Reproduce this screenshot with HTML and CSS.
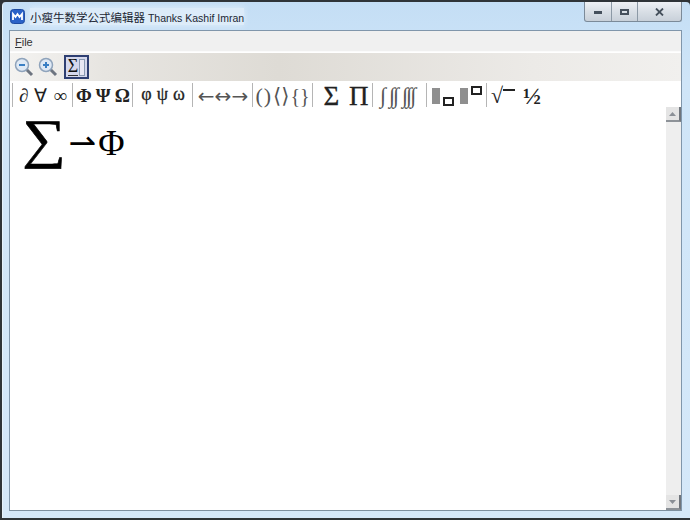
FILE: index.html
```html
<!DOCTYPE html>
<html lang="en">
<head>
    <meta charset="UTF-8">
    <title>小瘦牛数学公式编辑器 Thanks Kashif Imran</title>
    <link rel="stylesheet" href="styles.css">
</head>
<body>
    <div class="window">
        <div class="titlebar">
            <svg class="app-icon" width="15" height="15" viewBox="0 0 15 15">
                <rect x="0.5" y="0.5" width="14" height="14" rx="3" fill="#2a62c8" stroke="#1d4aa0"/>
                <path d="M3 11V5l2.500 3L7.500 5l2 3L12 5v6" fill="none" stroke="#fff" stroke-width="1.800"/>
            </svg>
            <span class="title"><span class="title-cjk">小瘦牛数学公式编辑器</span> Thanks Kashif Imran</span>
            <div class="controls">
                <div class="ctl ctl-min"><i></i></div>
                <div class="ctl ctl-max"><i></i></div>
                <div class="ctl ctl-close">
                    <svg width="9" height="8" viewBox="0 0 9 8"><path d="M1 .5l7 7M8 .5l-7 7" stroke="#45505c" stroke-width="1.800" fill="none"/></svg>
                </div>
            </div>
        </div>

        <div class="client">
            <div class="menubar"><span class="menu-item"><u>F</u>ile</span></div>

            <div class="toolbar">
                <button class="tool">
                    <svg width="20" height="20" viewBox="0 0 20 20">
                        <path d="M12 12l6 6" stroke="#6d7480" stroke-width="3"/>
                        <circle cx="8" cy="8" r="6.500" fill="#dfe9f5" stroke="#8fa3bb" stroke-width="1.500"/>
                        <path d="M5 8h6" stroke="#3a7fc4" stroke-width="2"/>
                    </svg>
                </button>
                <button class="tool">
                    <svg width="20" height="20" viewBox="0 0 20 20">
                        <path d="M12 12l6 6" stroke="#6d7480" stroke-width="3"/>
                        <circle cx="8" cy="8" r="6.500" fill="#dfe9f5" stroke="#8fa3bb" stroke-width="1.500"/>
                        <path d="M5 8h6M8 5v6" stroke="#3a7fc4" stroke-width="2"/>
                    </svg>
                </button>
                <button class="tool tool-active">
                    <span class="tool-sigma">Σ</span><span class="tool-box"></span>
                </button>
            </div>

            <div class="symbols">
                <div class="group"><span class="sym">∂</span><span class="sym">∀</span><span class="sym">∞</span></div>
                <div class="group bold"><span class="sym">Φ</span><span class="sym">Ψ</span><span class="sym">Ω</span></div>
                <div class="group bold small"><span class="sym">φ</span><span class="sym">ψ</span><span class="sym">ω</span></div>
                <div class="group arrows"><span class="sym">←</span><span class="sym">↔</span><span class="sym">→</span></div>
                <div class="group brackets"><span class="sym">()</span><span class="sym angle">⟨⟩</span><span class="sym brace">{}</span></div>
                <div class="group big"><span class="sym">Σ</span><span class="sym">Π</span></div>
                <div class="group integrals"><span class="sym">∫</span><span class="sym">∫∫</span><span class="sym">∫∫∫</span></div>
                <div class="group scripts">
                    <span class="script"><i class="block"></i><i class="box box-low"></i></span>
                    <span class="script"><i class="block"></i><i class="box box-high"></i></span>
                </div>
                <div class="group last"><span class="sym radical">√<i></i></span><span class="sym half">½</span></div>
            </div>

            <div class="editor">
                <div class="canvas">
                    <span class="f-sigma">∑</span>
                    <span class="f-arrow">⇀</span>
                    <span class="f-phi">Φ</span>
                </div>
                <div class="scrollbar">
                    <div class="sb-btn"><svg width="7" height="4" viewBox="0 0 7 4"><path d="M3.500 0L7 4H0z" fill="#8a8f96"/></svg></div>
                    <div class="sb-track"></div>
                    <div class="sb-btn"><svg width="7" height="4" viewBox="0 0 7 4"><path d="M0 0h7L3.500 4z" fill="#8a8f96"/></svg></div>
                </div>
            </div>
        </div>
    </div>
</body>
</html>
```

FILE: styles.css
```css
html, body {
    margin: 0;
    height: 100%;
    overflow: hidden;
}

body {
    background: #2f3438;
    padding: 2px 0 2px 2px;
    box-sizing: border-box;
    font-family: "Liberation Sans", "Noto Sans CJK SC", sans-serif;
}

.window {
    height: 100%;
    display: flex;
    flex-direction: column;
    background: linear-gradient(180deg, #c4def5 0%, #cfe5f8 15%, #d5e8f9 100%);
    border-radius: 4px 4px 0 0;
    padding: 0 8px 7px 6px;
    box-sizing: border-box;
    border-left: 1px solid #e6f2fb;
}

.titlebar {
    height: 28px;
    flex: none;
    display: flex;
    align-items: center;
    gap: 5px;
    padding-left: 1px;
}

.app-icon {
    flex: none;
}

.title {
    font-size: 10.500px;
    color: #1c2733;
    padding-top: 1px;
    background: rgba(235, 244, 252, 0.6);
    box-shadow: 0 0 6px rgba(235, 244, 252, 0.8);
}

.title-cjk {
    font-size: 11.500px;
}

.controls {
    margin-left: auto;
    align-self: flex-start;
    display: flex;
    height: 19px;
    border: 1px solid #7b8a99;
    border-top: none;
    border-radius: 0 0 3px 3px;
    background: linear-gradient(180deg, #eef1f5 0%, #d9dfe6 50%, #c8d0d9 100%);
}

.ctl {
    display: flex;
    align-items: center;
    justify-content: center;
    height: 100%;
    border-right: 1px solid #8c99a6;
}

.ctl-min { width: 26px; }
.ctl-max { width: 25px; }
.ctl-close { width: 43px; border-right: none; }

.ctl-min i {
    width: 8px;
    height: 3px;
    margin-top: 2px;
    background: #45505c;
}

.ctl-max i {
    width: 5px;
    height: 2px;
    border: 2px solid #45505c;
}

.client {
    flex: 1;
    min-height: 0;
    display: flex;
    flex-direction: column;
    background: #fff;
    border: 1px solid #8096ab;
    border-bottom-color: #7d8f9f;
}

.menubar {
    height: 20px;
    flex: none;
    background: #f0f0f0;
    border-bottom: 1px solid #fbfbfb;
    padding: 0 5px;
    font-size: 11px;
    line-height: 23px;
    color: #333;
}

.toolbar {
    height: 28px;
    flex: none;
    display: flex;
    align-items: center;
    gap: 4px;
    padding-left: 4px;
    background: linear-gradient(90deg, #f4f3f1 0%, #e7e5e1 14%, #dedbd5 40%, #eceae7 78%, #f1f0ee 100%);
    margin-top: 1px;
}

.tool {
    width: 20px;
    height: 24px;
    padding: 0;
    border: none;
    background: none;
    display: flex;
    align-items: center;
    justify-content: center;
}

.tool-active {
    width: 25px;
    margin-left: 2px;
    border: 2px solid #2e3f72;
    background: #d5d8ec;
    box-sizing: border-box;
    gap: 1px;
}

.tool-sigma {
    font-family: "Liberation Serif", serif;
    font-size: 18px;
    line-height: 17px;
    color: #111;
    border-bottom: 1px solid #333;
}

.tool-box {
    width: 4px;
    height: 15px;
    border: 1px solid #8a9ab2;
    background: #e8e8f4;
}

.symbols {
    height: 26px;
    flex: none;
    display: flex;
    padding-left: 2px;
    font-family: "Liberation Serif", serif;
    font-size: 19px;
    color: #222;
}

.group {
    width: 60px;
    flex: none;
    box-sizing: border-box;
    display: flex;
    align-items: center;
    justify-content: center;
    height: 24px;
    margin-top: 2px;
    border-left: 1px solid #b5b5b5;
    gap: 6px;
    padding: 2px 0 0 1px;
}

.sym {
    line-height: 22px;
    white-space: nowrap;
}

.bold {
    font-weight: bold;
    font-size: 19px;
    gap: 4px;
}

.small {
    font-weight: normal;
    -webkit-text-stroke: 0.3px #222;
    font-size: 18px;
    padding: 0 0 3px 1px;
    gap: 5px;
}

.arrows {
    gap: 0;
    font-family: "DejaVu Sans", sans-serif;
    font-size: 20px;
    color: #555;
}

.brackets {
    gap: 1px;
    color: #555;
    font-size: 22px;
    padding-left: 0;
}

.brackets .sym:first-child {
    letter-spacing: 1px;
}

.angle {
    font-family: "DejaVu Sans", sans-serif;
    font-size: 21px;
}

.brace {
    font-size: 20px;
}

.big {
    font-size: 27px;
    gap: 10px;
    padding-left: 7px;
    -webkit-text-stroke: 0.3px #222;
}

.integrals {
    width: 54px;
    font-size: 22px;
    gap: 5px;
    color: #555;
    letter-spacing: -2px;
    justify-content: flex-start;
    padding-left: 7px;
}

.scripts {
    gap: 3px;
    width: 60px;
    justify-content: flex-start;
    padding-left: 5px;
}

.script {
    position: relative;
    width: 25px;
    height: 20px;
    display: flex;
    align-items: center;
}

.block {
    width: 8px;
    height: 16px;
    background: #8f8f8f;
}

.box {
    position: absolute;
    right: 3px;
    width: 7px;
    height: 5px;
    border: 2px solid #222;
    background: #fff;
}

.box-low { bottom: 0; }
.box-high { top: 0; }

.last {
    justify-content: flex-start;
    padding-left: 4px;
    gap: 8px;
}

.radical {
    font-size: 22px;
    display: flex;
    align-items: flex-start;
}

.radical i {
    width: 12px;
    height: 2px;
    margin-top: 4px;
    background: #222;
}

.half {
    font-weight: bold;
    font-size: 24px;
}

.editor {
    flex: 1;
    min-height: 0;
    display: flex;
}

.canvas {
    flex: 1;
    display: flex;
    align-items: flex-start;
    padding: 0 0 0 13px;
    font-family: "Liberation Serif", serif;
    color: #000;
    overflow: hidden;
}

.f-sigma {
    font-size: 54px;
    line-height: 64px;
    transform: scaleX(1.130);
    margin: 0 3px 0 2px;
    -webkit-text-stroke: 0.6px #000;
}

.f-arrow {
    font-family: "DejaVu Sans", sans-serif;
    font-size: 33px;
    line-height: 58px;
    margin-left: 2px;
    margin-top: 7px;
}

.f-phi {
    font-size: 36px;
    line-height: 58px;
    margin-top: 7px;
    margin-left: 2px;
}

.scrollbar {
    width: 15px;
    flex: none;
    display: flex;
    flex-direction: column;
    background: #eeeeee;
}

.sb-btn {
    height: 15px;
    flex: none;
    display: flex;
    align-items: center;
    justify-content: center;
    background: #e4e4e4;
    border-right: 2px solid #70757c;
    border-bottom: 2px solid #8d9298;
    box-sizing: border-box;
}

.sb-track {
    flex: 1;
}
```
